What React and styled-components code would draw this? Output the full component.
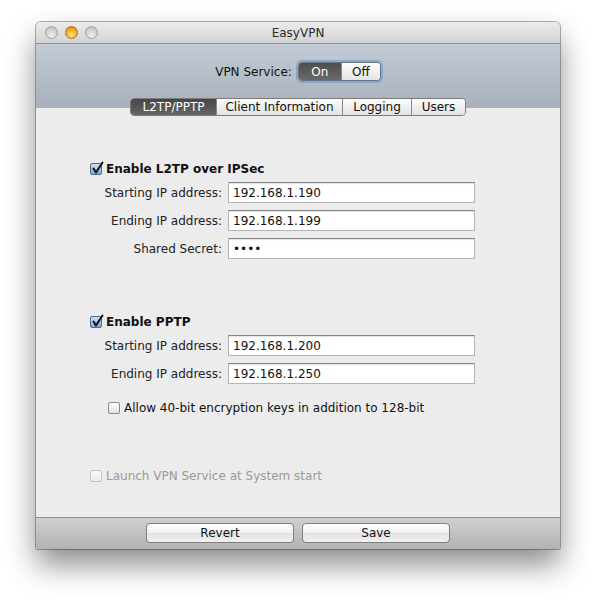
import styled, { createGlobalStyle } from "styled-components";

const GlobalStyle = createGlobalStyle`
  html, body {
    margin: 0;
    background: #ffffff;
  }
  body {
    font-family: "DejaVu Sans", "Liberation Sans", sans-serif;
    font-size: 12px;
    color: #111;
  }
`;

const Page = styled.div`
  padding: 22px 0 0 36px;
  height: 578px;
`;

const Window = styled.div`
  width: 524px;
  height: 527px;
  display: flex;
  flex-direction: column;
  border-radius: 5px 5px 2px 2px;
  overflow: hidden;
  background: #ececec;
  box-shadow: 0 0 0 1px rgba(0, 0, 0, 0.3), 0 16px 30px rgba(0, 0, 0, 0.45);
`;

const TitleBar = styled.div`
  position: relative;
  height: 21px;
  flex: none;
  display: flex;
  align-items: center;
  justify-content: center;
  background: linear-gradient(#ebebeb, #d3d3d3);
  font-size: 12px;
  color: #2c2c2c;
`;

const Lights = styled.div`
  position: absolute;
  left: 9px;
  top: 4px;
  display: flex;
  gap: 7px;
`;

const Light = styled.span`
  width: 13px;
  height: 13px;
  border-radius: 50%;
  box-sizing: border-box;
  border: 1px solid ${(p) => (p.$active ? "#b07318" : "#a3a3a3")};
  background: ${(p) =>
    p.$active
      ? "radial-gradient(circle at 50% 70%, #ffe58a 0%, #f8b53a 45%, #c97b0c 100%)"
      : "radial-gradient(circle at 50% 75%, #f1f1f1 0%, #d2d2d2 55%, #b8b8b8 100%)"};
`;

const Toolbar = styled.div`
  height: 65px;
  flex: none;
  display: flex;
  flex-direction: column;
  align-items: center;
  background: linear-gradient(#c3cbd4, #a8b1bb);
  border-top: 1px solid #8e939a;
  box-sizing: border-box;
`;

const ServiceRow = styled.div`
  flex: none;
  margin-top: 18px;
  display: flex;
  align-items: center;
  gap: 6px;
  font-size: 12px;
  color: #111;
`;

const Segmented = styled.div`
  display: flex;
  height: 19px;
  border-radius: 4px;
  border: 1px solid #6d7480;
  box-sizing: border-box;
  overflow: hidden;
  box-shadow: 0 0 0 2px rgba(95, 145, 215, 0.55);
`;

const Segment = styled.div`
  width: ${(p) => p.$w}px;
  display: flex;
  align-items: center;
  justify-content: center;
  font-size: 12px;
  color: ${(p) => (p.$on ? "#fff" : "#111")};
  background: ${(p) =>
    p.$on ? "linear-gradient(#4e4e4e, #6a6a6a)" : "linear-gradient(#fdfdfd, #e4e4e4)"};
  & + & {
    border-left: 1px solid #8a8a8a;
  }
`;

const Tabs = styled.div`
  flex: none;
  margin-top: 17px;
  display: flex;
  height: 18px;
  position: relative;
  z-index: 1;
  border-radius: 4px;
  border: 1px solid #7c7c7c;
  box-sizing: border-box;
  overflow: hidden;
`;

const Tab = styled.div`
  width: ${(p) => p.$w}px;
  display: flex;
  align-items: center;
  justify-content: center;
  font-size: 12px;
  color: ${(p) => (p.$active ? "#fff" : "#111")};
  background: ${(p) =>
    p.$active ? "linear-gradient(#464646, #666)" : "linear-gradient(#fcfcfc, #e2e2e2)"};
  & + & {
    border-left: 1px solid #8a8a8a;
  }
`;

const Content = styled.div`
  flex: 1;
  padding: 54px 0 0 54px;
  display: flex;
  flex-direction: column;
`;

const CheckRow = styled.label`
  display: flex;
  align-items: center;
  gap: 4px;
  height: 14px;
  margin-left: ${(p) => p.$indent || 0}px;
  font-weight: ${(p) => (p.$bold ? "bold" : "normal")};
  color: ${(p) => (p.$disabled ? "#9a9a9a" : "#111")};
`;

const Box = styled.span`
  width: 12px;
  height: 12px;
  flex: none;
  box-sizing: border-box;
  border-radius: 2px;
  border: 1px solid ${(p) => (p.$disabled ? "#c4c4c4" : p.$checked ? "#51688a" : "#8a8a8a")};
  background: ${(p) =>
    p.$checked
      ? "linear-gradient(#cfe0f5, #7ea8de)"
      : p.$disabled
      ? "linear-gradient(#f8f8f8, #ececec)"
      : "linear-gradient(#ffffff, #e3e3e3)"};
  position: relative;
  svg {
    position: absolute;
    left: 0px;
    top: -3px;
  }
`;

const Fields = styled.div`
  display: grid;
  grid-template-columns: 132px 247px;
  column-gap: 6px;
  row-gap: 7px;
  margin-top: 6px;
  align-items: center;
`;

const Label = styled.span`
  text-align: right;
  color: #222;
`;

const Field = styled.input`
  height: 21px;
  box-sizing: border-box;
  border: 1px solid #b4b4b4;
  border-top-color: #858585;
  background: #fff;
  box-shadow: inset 0 1px 1px rgba(0, 0, 0, 0.12);
  padding: 0 4px;
  font-family: "DejaVu Sans", "Liberation Sans", sans-serif;
  font-size: 12px;
  color: #111;
  outline: none;
`;

const Spacer = styled.div`
  height: ${(p) => p.$h}px;
  flex: none;
`;

const BottomBar = styled.div`
  height: 32px;
  flex: none;
  box-sizing: border-box;
  border-top: 1px solid #8f8f8f;
  background: linear-gradient(#cfcfcf, #b3b3b3);
  display: flex;
  justify-content: center;
  align-items: flex-start;
  padding-top: 5px;
  gap: 8px;
`;

const Button = styled.button`
  width: 148px;
  height: 20px;
  border-radius: 4px;
  border: 1px solid #7f7f7f;
  background: linear-gradient(#ffffff, #f1f1f1 50%, #e2e2e2 51%, #f2f2f2);
  font-family: "DejaVu Sans", "Liberation Sans", sans-serif;
  font-size: 12px;
  color: #111;
  padding: 0;
`;

const Check = ({ checked, disabled }) => (
  <Box $checked={checked} $disabled={disabled}>
    {checked && (
      <svg width="13" height="14" viewBox="0 0 13 14">
        <path
          d="M2.5 7.5 L5 11.5 L11.5 1.5"
          fill="none"
          stroke="#111"
          strokeWidth="2"
          strokeLinecap="round"
          strokeLinejoin="round"
        />
      </svg>
    )}
  </Box>
);

const tabs = [
  { name: "L2TP/PPTP", w: 85 },
  { name: "Client Information", w: 125 },
  { name: "Logging", w: 68 },
  { name: "Users", w: 53 },
];

export default function App() {
  return (
    <>
      <GlobalStyle />
      <Page>
        <Window>
          <TitleBar>
            <Lights>
              <Light />
              <Light $active />
              <Light />
            </Lights>
            EasyVPN
          </TitleBar>

          <Toolbar>
            <ServiceRow>
              VPN Service:
              <Segmented>
                <Segment $on $w={42}>On</Segment>
                <Segment $w={38}>Off</Segment>
              </Segmented>
            </ServiceRow>
            <Tabs>
              {tabs.map((t, i) => (
                <Tab key={t.name} $w={t.w} $active={i === 0}>
                  {t.name}
                </Tab>
              ))}
            </Tabs>
          </Toolbar>

          <Content>
            <CheckRow $bold>
              <Check checked />
              Enable L2TP over IPSec
            </CheckRow>
            <Fields>
              <Label>Starting IP address:</Label>
              <Field defaultValue="192.168.1.190" />
              <Label>Ending IP address:</Label>
              <Field defaultValue="192.168.1.199" />
              <Label>Shared Secret:</Label>
              <Field type="password" defaultValue="abcd" />
            </Fields>

            <Spacer $h={56} />

            <CheckRow $bold>
              <Check checked />
              Enable PPTP
            </CheckRow>
            <Fields>
              <Label>Starting IP address:</Label>
              <Field defaultValue="192.168.1.200" />
              <Label>Ending IP address:</Label>
              <Field defaultValue="192.168.1.250" />
            </Fields>

            <Spacer $h={17} />
            <CheckRow $indent={18}>
              <Check />
              Allow 40-bit encryption keys in addition to 128-bit
            </CheckRow>

            <Spacer $h={54} />
            <CheckRow $disabled>
              <Check disabled />
              Launch VPN Service at System start
            </CheckRow>
          </Content>

          <BottomBar>
            <Button>Revert</Button>
            <Button>Save</Button>
          </BottomBar>
        </Window>
      </Page>
    </>
  );
}
